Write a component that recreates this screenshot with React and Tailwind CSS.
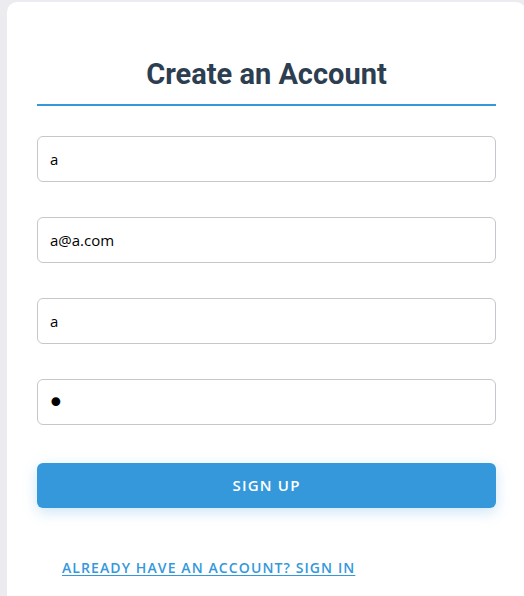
export default function App() {
  const fields = [
    { type: 'text', value: 'a' },
    { type: 'email', value: 'a@a.com' },
    { type: 'text', value: 'a' },
    { type: 'password', value: 'a' }
  ];

  return (
    <div className="h-[596px] w-[524px] overflow-hidden bg-[#ebebf0] pl-[7px] pt-[2px]">
      <div className="h-[640px] w-[519px] rounded-[10px] bg-white px-[30px] pt-[55px]">
        <h2 className="border-b-2 border-[#3498db] pb-[13px] text-center font-['Roboto',sans-serif] text-[29px] leading-[34px] font-bold text-[#2c3e50]">
          Create an Account
        </h2>

        <form className="mt-[30px] flex flex-col gap-[35px] font-['Open_Sans',sans-serif]">
          {fields.map((field, i) => (
            <input
              key={i}
              type={field.type}
              defaultValue={field.value}
              className={
                field.type === 'password'
                  ? "h-[46px] w-full rounded-[6px] border border-[#c4c7cc] px-[9px] font-['DejaVu_Sans',sans-serif] text-[30px] text-black outline-none"
                  : 'h-[46px] w-full rounded-[6px] border border-[#c4c7cc] px-3 text-[15px] text-black outline-none'
              }
            />
          ))}
        </form>

        <button
          type="button"
          className="mt-[38px] h-[45px] w-full rounded-[6px] bg-[#3498db] font-['Open_Sans',sans-serif] text-[15px] font-semibold tracking-[1.2px] text-white shadow-[0_4px_14px_rgba(52,152,219,0.25)]"
        >
          SIGN UP
        </button>

        <div className="mt-[47px] pl-[25px]">
          <a
            href="#"
            className="font-['Open_Sans',sans-serif] text-[14px] font-semibold tracking-[1.1px] text-[#3498db] underline underline-offset-2"
          >
            ALREADY HAVE AN ACCOUNT? SIGN IN
          </a>
        </div>
      </div>
    </div>
  );
}
